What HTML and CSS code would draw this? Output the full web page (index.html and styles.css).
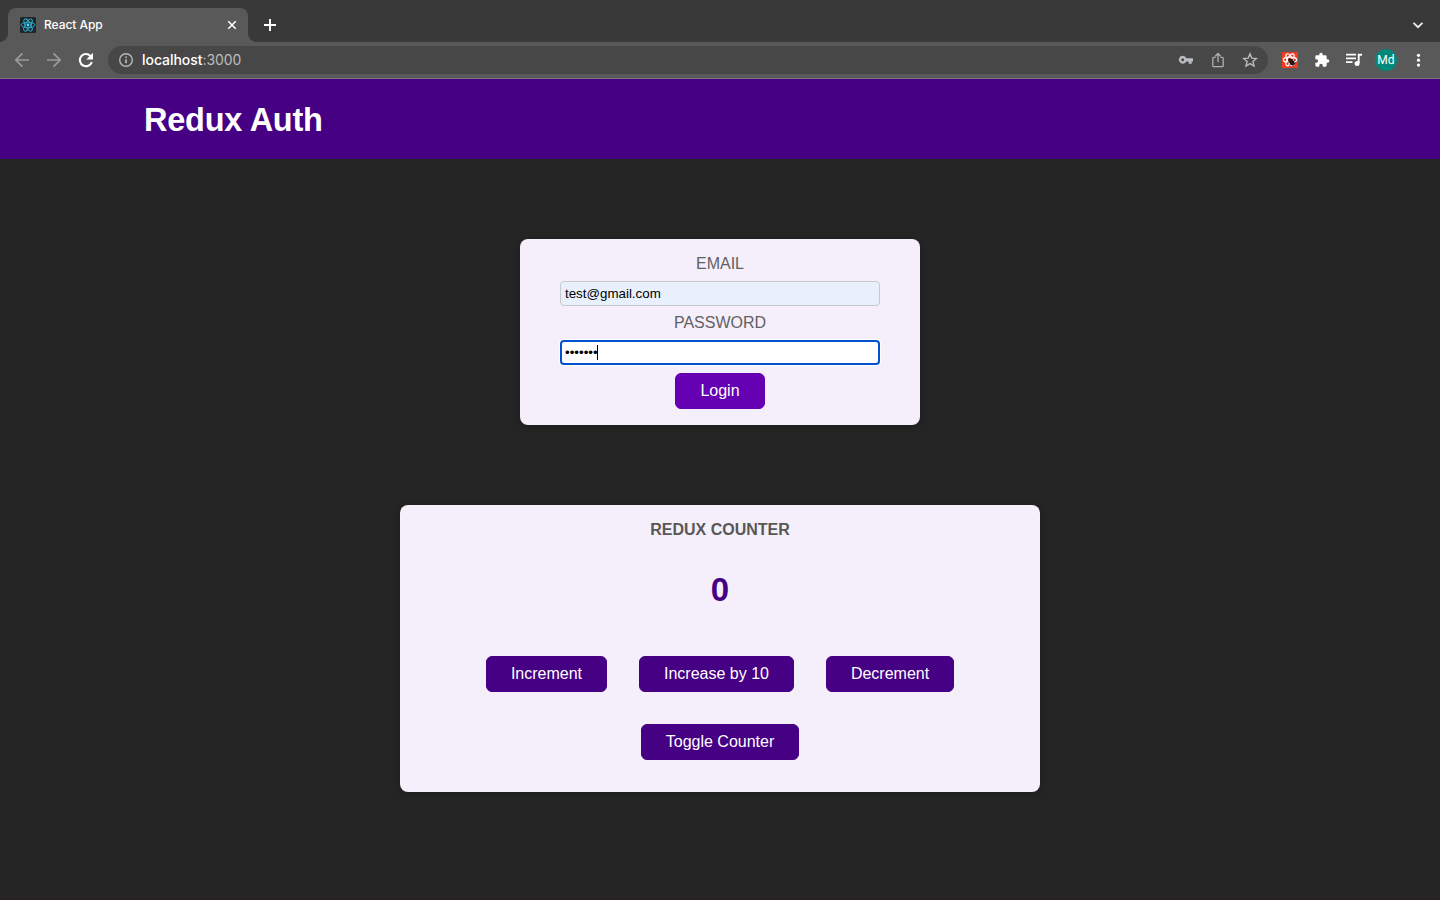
FILE: index.html
```html
<!DOCTYPE html>
<html lang="en">
<head>
<meta charset="utf-8">
<title>React App</title>
<link rel="stylesheet" href="styles.css">
</head>
<body>
<div class="browser">
  <div class="tabstrip">
    <div class="tab">
      <svg class="favicon" width="16" height="16" viewBox="0 0 16 16"><rect width="16" height="16" rx="1.5" fill="#20232a"/><g fill="none" stroke="#28b4d2" stroke-width=".9"><ellipse cx="8" cy="8" rx="6.9" ry="2.7"/><ellipse cx="8" cy="8" rx="6.9" ry="2.7" transform="rotate(60 8 8)"/><ellipse cx="8" cy="8" rx="6.9" ry="2.7" transform="rotate(120 8 8)"/></g><circle cx="8" cy="8" r="1.4" fill="#61dafb"/></svg>
      <span class="tab-title">React App</span>
      <svg width="16" height="16" viewBox="0 0 16 16"><path d="M4.3 4.3l7.4 7.4M11.7 4.3l-7.4 7.4" stroke="#fff" stroke-width="1.6"/></svg>
    </div>
    <svg class="new-tab" width="16" height="16" viewBox="0 0 16 16"><path d="M8 2v12M2 8h12" stroke="#fff" stroke-width="1.9"/></svg>
    <svg class="tab-search" width="16" height="16" viewBox="0 0 16 16"><path d="M3.5 5.8L8 10.2l4.5-4.4" fill="none" stroke="#eee" stroke-width="1.8"/></svg>
  </div>
  <div class="toolbar">
    <div class="nav">
      <svg width="16" height="16" viewBox="0 0 16 16"><path d="M15 8H1.8M8.5 1.3L1.8 8l6.700 6.700" fill="none" stroke="#9b9b9b" stroke-width="1.7"/></svg>
      <svg width="16" height="16" viewBox="0 0 16 16"><path d="M1 8h13.2M7.5 1.3L14.2 8l-6.700 6.700" fill="none" stroke="#9b9b9b" stroke-width="1.7"/></svg>
      <svg width="16" height="16" viewBox="0 0 16 16"><path d="M13.8 10A6.100 6.100 0 1 1 12.400 3.900L13.500 5" fill="none" stroke="#fff" stroke-width="2.100"/><path d="M15 .8v6.700H8.300z" fill="#fff"/></svg>
    </div>
    <div class="omnibox">
      <svg width="16" height="16" viewBox="0 0 16 16"><circle cx="8" cy="8" r="6.3" fill="none" stroke="#b4b8bc" stroke-width="1.4"/><path d="M8 7.2v4M8 4.500v1.600" stroke="#b4b8bc" stroke-width="1.7"/></svg>
      <span class="url">localhost<span class="port">:3000</span></span>
      <svg width="16" height="16" viewBox="0 0 16 16"><path fill="#b9bdc1" fill-rule="evenodd" d="M4.700 3.700a4 4 0 0 1 3.700 2.600H15v3.300h-1.300v2.100h-3V9.600H8.400A4 4 0 1 1 4.700 3.700zm0 2.600a1.500 1.500 0 1 0 0 3 1.500 1.500 0 0 0 0-3z"/></svg>
      <svg width="16" height="16" viewBox="0 0 16 16"><path d="M5.600 5.300H3.800q-1 0-1 1v7.400q0 1 1 1h8.400q1 0 1-1V6.300q0-1-1-1h-1.800M8 10.200V1.800M5.200 4.300L8 1.500l2.800 2.800" fill="none" stroke="#b0b0b0" stroke-width="1.300"/></svg>
      <svg width="16" height="16" viewBox="0 0 16 16"><path d="M8 1.900l1.800 4.200 4.600.4-3.500 3 1.100 4.500L8 11.600 4 14l1.100-4.500-3.500-3 4.600-.4z" fill="none" stroke="#bbb" stroke-width="1.400"/></svg>
    </div>
    <div class="extensions">
      <svg width="16" height="16" viewBox="0 0 16 16"><rect width="16" height="16" fill="#ef3b20"/><g fill="none" stroke="#fff" stroke-width="1.200"><ellipse cx="8" cy="7.800" rx="6.700" ry="2.600"/><ellipse cx="8" cy="7.800" rx="6.700" ry="2.600" transform="rotate(60 8 7.800)"/><ellipse cx="8" cy="7.800" rx="6.700" ry="2.600" transform="rotate(120 8 7.800)"/></g><g transform="rotate(-40 9.500 10)"><ellipse cx="9.500" cy="10.400" rx="2.300" ry="3.200" fill="#251713"/><circle cx="9.500" cy="6.800" r="1.300" fill="#251713"/><path d="M6 8l7 1M6 11h7M7 14l5-1" stroke="#251713" stroke-width=".9"/></g></svg>
      <svg width="16" height="16" viewBox="0 0 24 24"><path fill="#fff" d="M20.500 11H19V7a2 2 0 0 0-2-2h-4V3.500a2.500 2.500 0 0 0-5 0V5H4a2 2 0 0 0-2 2v3.800h1.500a2.700 2.700 0 0 1 0 5.400H2V20a2 2 0 0 0 2 2h3.800v-1.500a2.700 2.700 0 0 1 5.400 0V22H17a2 2 0 0 0 2-2v-4h1.500a2.500 2.500 0 0 0 0-5z"/></svg>
      <svg width="16" height="16" viewBox="0 0 16 16"><path d="M0 2.700h10M0 6.400h10M0 10.100h6.500" stroke="#fff" stroke-width="1.700"/><path d="M12.700 11V2.800H16" fill="none" stroke="#fff" stroke-width="1.900"/><circle cx="11.100" cy="11.400" r="2.500" fill="#fff"/></svg>
      <span class="avatar">Md</span>
      <svg class="menu" width="16" height="16" viewBox="0 0 16 16"><g fill="#fff"><circle cx="8.500" cy="3.300" r="1.600"/><circle cx="8.500" cy="8.200" r="1.600"/><circle cx="8.500" cy="13.100" r="1.600"/></g></svg>
    </div>
  </div>
  <div class="page">
    <header class="header"><h1 class="brand">Redux Auth</h1></header>
    <main class="main">
      <section class="card login-card">
        <label class="label" for="email">EMAIL</label>
        <input class="input autofill" id="email" type="text" value="test@gmail.com">
        <label class="label">PASSWORD</label>
        <div class="input focused"><span class="dots">•••••••</span><span class="caret"></span></div>
        <button class="button login">Login</button>
      </section>
      <section class="card counter">
        <h2 class="counter-title">REDUX COUNTER</h2>
        <div class="value">0</div>
        <div class="buttons">
          <button class="button increment">Increment</button>
          <button class="button increase">Increase by 10</button>
          <button class="button decrement">Decrement</button>
        </div>
        <button class="button toggle">Toggle Counter</button>
      </section>
    </main>
  </div>
</div>
</body>
</html>
```

FILE: styles.css
```css
* { box-sizing: border-box; }
body { margin: 0; background: #252525; font-family: "Liberation Sans", Arial, sans-serif; }
svg { display: block; flex: none; }
.browser { height: 900px; display: flex; flex-direction: column; overflow: hidden; }
.tabstrip { height: 42px; background: #393939; display: flex; align-items: center; padding: 8px 14px 0 8px; }
.tab { position: relative; width: 240px; height: 34px; background: #595959; border-radius: 8px 8px 0 0; display: flex; align-items: center; gap: 8px; padding: 0 8px 0 12px; }
.tab::before, .tab::after { content: ""; position: absolute; bottom: 0; width: 8px; height: 8px; }
.tab::before { left: -8px; background: radial-gradient(circle at 0 0, #393939 7.5px, #595959 8px); }
.tab::after { right: -8px; background: radial-gradient(circle at 100% 0, #393939 7.5px, #595959 8px); }
.tab-title { flex: 1; font: 500 12px/16px Inter, sans-serif; letter-spacing: -.05px; color: #fff; }
.new-tab { margin-left: 14px; }
.tab-search { margin-left: auto; }
.toolbar { height: 37px; background: #595959; border-bottom: 1px solid #777; display: flex; align-items: center; padding: 0 14px; }
.nav { display: flex; gap: 16px; }
.omnibox { width: 1160px; height: 28px; margin-left: 14px; border-radius: 14px; background: #474747; display: flex; align-items: center; gap: 16px; padding: 0 10px; }
.url { flex: 1; margin-left: -8px; font: 500 14px/20px Inter, sans-serif; letter-spacing: -.05px; color: #fff; }
.port { font-weight: 400; color: #bcbcbc; }
.extensions { flex: 1; display: flex; align-items: center; gap: 16px; margin-left: 14px; }
.avatar { width: 22px; height: 22px; margin: 0 -3px; border-radius: 50%; background: #00897b; color: #fff; font: 12px/23px Roboto, sans-serif; letter-spacing: .2px; text-align: center; }
.page { flex: 1; background: #252525; border-bottom: 2px solid #271f24; }
.header { height: 80px; padding: 0 144px; background: #450084; display: flex; align-items: center; }
.brand { margin: 2px 0 0; color: #fff; font-size: 32.5px; line-height: 40px; letter-spacing: -.25px; }
.main { display: flex; flex-direction: column; align-items: center; gap: 80px; padding-top: 80px; }
.card { background: #f5effc; border-radius: 8px; box-shadow: 0 1px 8px rgba(0, 0, 0, .25); display: flex; flex-direction: column; align-items: center; padding: 16px; }
.login-card { width: 400px; height: 186px; gap: 8px; }
.label { color: #616161; font-size: 16px; line-height: 18px; }
.input { width: 320px; height: 25px; border: 1px solid #c8c8c8; border-radius: 4px; padding: 1px 4px; font: 13.333px/21px "Liberation Sans", Arial, sans-serif; color: #000; background: #fff; }
.autofill { background: #e8f0fe; }
.focused { display: flex; align-items: center; border: 2px solid #0050d0; padding: 0 3px; box-shadow: 0 0 0 1px #fff; }
.dots { width: 32px; white-space: nowrap; font-size: 13.333px; }
.caret { width: 1px; height: 15px; background: #000; }
.button { height: 36px; border: 1px solid #450084; border-radius: 6px; background: #450084; color: #fff; padding: 0 0 1px; font: 16px/18px "Liberation Sans", Arial, sans-serif; }
.login { width: 90px; background: #6600b3; border-color: #6600b3; }
.counter { width: 640px; height: 287px; }
.counter-title { margin: 0; color: #575757; font-size: 16px; line-height: 18px; }
.value { margin: 32px 0 47px; color: #450084; font-size: 33px; font-weight: bold; line-height: 38px; }
.buttons { display: flex; gap: 32px; }
.increment { width: 121px; }
.increase { width: 155px; }
.decrement { width: 128px; }
.toggle { width: 158px; margin-top: 32px; }
```
